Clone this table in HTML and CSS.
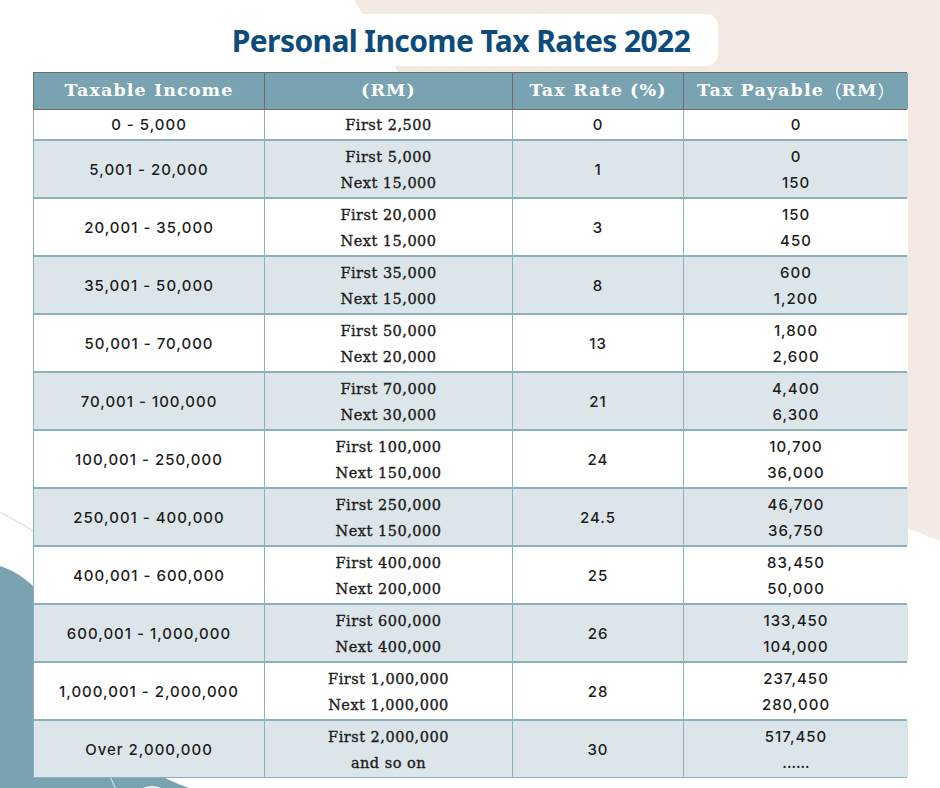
FILE: index.html
```html
<!DOCTYPE html>
<html lang="en">
<head>
<meta charset="utf-8">
<title>Personal Income Tax Rates 2022</title>
<link rel="stylesheet" href="styles.css">
</head>
<body>
<div class="page">
  <svg class="backdrop" width="940" height="788" viewBox="0 0 940 788" aria-hidden="true">
    <polygon points="354,0 940,0 940,541 604,408" fill="#f4eae5"/>
    <line x1="0" y1="512" x2="120" y2="580" stroke="#dde8ec" stroke-width="1.5"/>
    <path d="M0,566 C25,574 45,595 60,620 L155,772 Q170,782 195,790 L0,790 Z" fill="#7aa3b2"/>
    <line x1="110" y1="776" x2="116" y2="790" stroke="#cfe0e6" stroke-width="1.2"/>
    <ellipse cx="152" cy="791" rx="11" ry="5" fill="#e6eff2"/>
  </svg>

  <header class="title-row">
    <h1 class="title">Personal Income Tax Rates 2022</h1>
  </header>

  <div class="table">
    <div class="thead">
      <div class="th">Taxable Income</div>
      <div class="th">(RM)</div>
      <div class="th">Tax Rate (%)</div>
      <div class="th">Tax Payable<span class="cjk">（</span>RM<span class="cjk">）</span></div>
    </div>
    <div class="tbody">
      <div class="td sans single">0 - 5,000</div>
      <div class="td serif single">First 2,500</div>
      <div class="td sans single">0</div>
      <div class="td sans single">0</div>

      <div class="td sans alt">5,001 - 20,000</div>
      <div class="td serif alt"><span>First 5,000</span><span>Next 15,000</span></div>
      <div class="td sans alt">1</div>
      <div class="td sans alt"><span>0</span><span>150</span></div>

      <div class="td sans">20,001 - 35,000</div>
      <div class="td serif"><span>First 20,000</span><span>Next 15,000</span></div>
      <div class="td sans">3</div>
      <div class="td sans"><span>150</span><span>450</span></div>

      <div class="td sans alt">35,001 - 50,000</div>
      <div class="td serif alt"><span>First 35,000</span><span>Next 15,000</span></div>
      <div class="td sans alt">8</div>
      <div class="td sans alt"><span>600</span><span>1,200</span></div>

      <div class="td sans">50,001 - 70,000</div>
      <div class="td serif"><span>First 50,000</span><span>Next 20,000</span></div>
      <div class="td sans">13</div>
      <div class="td sans"><span>1,800</span><span>2,600</span></div>

      <div class="td sans alt">70,001 - 100,000</div>
      <div class="td serif alt"><span>First 70,000</span><span>Next 30,000</span></div>
      <div class="td sans alt">21</div>
      <div class="td sans alt"><span>4,400</span><span>6,300</span></div>

      <div class="td sans">100,001 - 250,000</div>
      <div class="td serif"><span>First 100,000</span><span>Next 150,000</span></div>
      <div class="td sans">24</div>
      <div class="td sans"><span>10,700</span><span>36,000</span></div>

      <div class="td sans alt">250,001 - 400,000</div>
      <div class="td serif alt"><span>First 250,000</span><span>Next 150,000</span></div>
      <div class="td sans alt">24.5</div>
      <div class="td sans alt"><span>46,700</span><span>36,750</span></div>

      <div class="td sans">400,001 - 600,000</div>
      <div class="td serif"><span>First 400,000</span><span>Next 200,000</span></div>
      <div class="td sans">25</div>
      <div class="td sans"><span>83,450</span><span>50,000</span></div>

      <div class="td sans alt">600,001 - 1,000,000</div>
      <div class="td serif alt"><span>First 600,000</span><span>Next 400,000</span></div>
      <div class="td sans alt">26</div>
      <div class="td sans alt"><span>133,450</span><span>104,000</span></div>

      <div class="td sans">1,000,001 - 2,000,000</div>
      <div class="td serif"><span>First 1,000,000</span><span>Next 1,000,000</span></div>
      <div class="td sans">28</div>
      <div class="td sans"><span>237,450</span><span>280,000</span></div>

      <div class="td sans alt">Over 2,000,000</div>
      <div class="td serif alt"><span>First 2,000,000</span><span>and so on</span></div>
      <div class="td sans alt">30</div>
      <div class="td sans alt"><span>517,450</span><span class="dots">......</span></div>
    </div>
  </div>
</div>
</body>
</html>
```

FILE: styles.css
```css
* { box-sizing: border-box; }

html, body {
  margin: 0;
  padding: 0;
  background: #ffffff;
}

.page {
  position: relative;
  width: 940px;
  height: 788px;
  overflow: hidden;
  background: #ffffff;
}

.backdrop {
  position: absolute;
  left: 0;
  top: 0;
  z-index: 0;
}

.title-row {
  position: relative;
  z-index: 1;
  display: flex;
  padding-top: 14px;
  padding-left: 204px;
  margin-bottom: 6px;
}

.title {
  margin: 0;
  width: 514px;
  height: 52px;
  background: #ffffff;
  border-radius: 12px;
  display: flex;
  align-items: center;
  justify-content: center;
  padding-top: 1px;
  font-family: "Noto Sans", "DejaVu Sans", sans-serif;
  font-weight: 700;
  font-size: 30px;
  letter-spacing: -0.6px;
  color: #0c4b7b;
}

.table {
  position: relative;
  z-index: 1;
  margin-left: 33px;
  width: 874px;
}

.thead,
.tbody {
  display: grid;
  grid-template-columns: 230px 247px 170px 224px;
}

.thead {
  background: #6a6c6d;
  padding: 1px;
  column-gap: 1px;
}

.th {
  height: 36px;
  background: #7aa3b2;
  color: #ffffff;
  display: flex;
  align-items: center;
  justify-content: center;
  line-height: 1;
  font-family: "DejaVu Serif", serif;
  font-weight: 700;
  font-size: 17.5px;
  letter-spacing: 1.1px;
}

.cjk {
  font-family: "Noto Sans CJK SC", "DejaVu Serif", sans-serif;
  font-weight: 400;
  letter-spacing: 0;
}

.tbody {
  background: #8db0bf;
  padding: 0 1px 1px 1px;
  gap: 2px 1px;
}

.td {
  height: 56px;
  background: #ffffff;
  display: flex;
  flex-direction: column;
  align-items: center;
  justify-content: center;
  padding-top: 2px;
  line-height: 26px;
  color: #1c1c1c;
}

.td.single { height: 29px; padding-top: 1px; }

.td.alt { background: #dce6ea; }

.sans {
  font-family: "Inter", "Noto Sans", sans-serif;
  font-weight: 500;
  font-size: 15px;
  letter-spacing: 1px;
}

.serif {
  font-family: "DejaVu Serif", "Liberation Serif", serif;
  font-size: 14.5px;
  letter-spacing: 0.5px;
  -webkit-text-stroke: 0.35px #1c1c1c;
}

.dots {
  letter-spacing: 0;
}
```
